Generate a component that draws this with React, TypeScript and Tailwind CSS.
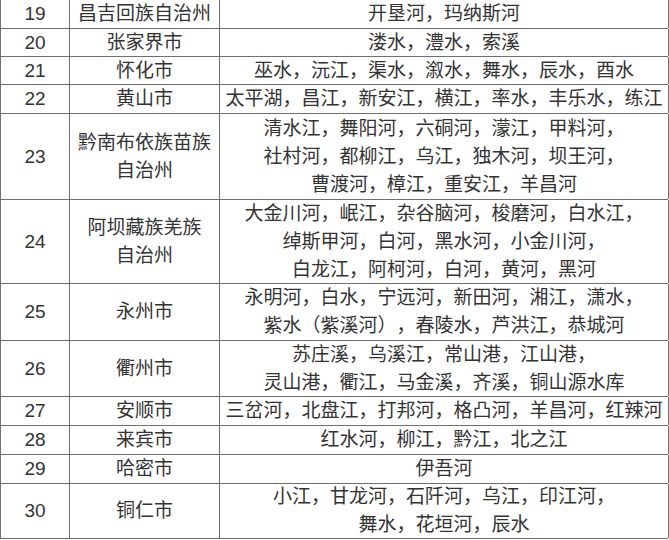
const rows: { no: string; city: string[]; rivers: string[]; h: string }[] = [
  { no: "19", city: ["昌吉回族自治州"], rivers: ["开垦河，玛纳斯河"], h: "h-[29px]" },
  { no: "20", city: ["张家界市"], rivers: ["溇水，澧水，索溪"], h: "h-[28px]" },
  { no: "21", city: ["怀化市"], rivers: ["巫水，沅江，渠水，溆水，舞水，辰水，酉水"], h: "h-[28px]" },
  { no: "22", city: ["黄山市"], rivers: ["太平湖，昌江，新安江，横江，率水，丰乐水，练江"], h: "h-[29px]" },
  {
    no: "23",
    city: ["黔南布依族苗族", "自治州"],
    rivers: ["清水江，舞阳河，六硐河，濛江，甲料河，", "社村河，都柳江，乌江，独木河，坝王河，", "曹渡河，樟江，重安江，羊昌河"],
    h: "h-[86px]",
  },
  {
    no: "24",
    city: ["阿坝藏族羌族", "自治州"],
    rivers: ["大金川河，岷江，杂谷脑河，梭磨河，白水江，", "绰斯甲河，白河，黑水河，小金川河，", "白龙江，阿柯河，白河，黄河，黑河"],
    h: "h-[84px]",
  },
  {
    no: "25",
    city: ["永州市"],
    rivers: ["永明河，白水，宁远河，新田河，湘江，潇水，", "紫水（紫溪河），春陵水，芦洪江，恭城河"],
    h: "h-[57px]",
  },
  {
    no: "26",
    city: ["衢州市"],
    rivers: ["苏庄溪，乌溪江，常山港，江山港，", "灵山港，衢江，马金溪，齐溪，铜山源水库"],
    h: "h-[56px]",
  },
  { no: "27", city: ["安顺市"], rivers: ["三岔河，北盘江，打邦河，格凸河，羊昌河，红辣河"], h: "h-[29px]" },
  { no: "28", city: ["来宾市"], rivers: ["红水河，柳江，黔江，北之江"], h: "h-[29px]" },
  { no: "29", city: ["哈密市"], rivers: ["伊吾河"], h: "h-[29px]" },
  {
    no: "30",
    city: ["铜仁市"],
    rivers: ["小江，甘龙河，石阡河，乌江，印江河，", "舞水，花垣河，辰水"],
    h: "h-[55px]",
  },
];

export default function App() {
  return (
    <div className="w-[669px] h-[540px] bg-white overflow-hidden font-['Liberation_Sans','Noto_Sans_CJK_SC',sans-serif] text-[19px] leading-[28px] text-[#333] [text-spacing-trim:space-all]">
      <div className="w-[668px] border-l border-[#6f6f6f]">
        {rows.map((r) => (
          <div key={r.no} className={`flex border-b border-[#6f6f6f] ${r.h}`}>
            <div className="w-[69px] shrink-0 border-r border-[#6f6f6f] flex items-center justify-center">
              {r.no}
            </div>
            <div className="w-[150px] shrink-0 border-r border-[#6f6f6f] flex flex-col items-center justify-center">
              {r.city.map((c) => (
                <span key={c}>{c}</span>
              ))}
            </div>
            <div className="w-[449px] shrink-0 border-r border-[#6f6f6f] flex flex-col items-center justify-center">
              {r.rivers.map((t) => (
                <span key={t} className="whitespace-nowrap">
                  {t}
                </span>
              ))}
            </div>
          </div>
        ))}
      </div>
    </div>
  );
}
